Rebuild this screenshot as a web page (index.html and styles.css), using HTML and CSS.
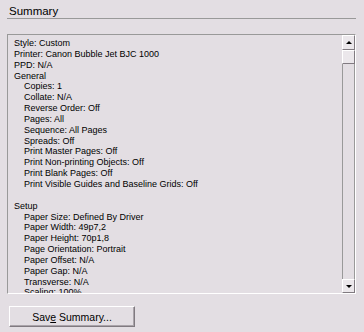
FILE: index.html
```html
<!DOCTYPE html>
<html lang="en">
<head>
    <meta charset="UTF-8">
    <meta name="viewport" content="width=device-width, initial-scale=1.0">
    <title>Summary</title>
    <link rel="stylesheet" href="styles.css">
</head>
<body>
    <div class="panel">
        <div class="title">Summary</div>

        <div class="listbox">
            <div class="list-content">
                <div>Style: Custom</div>
                <div>Printer: Canon Bubble Jet BJC 1000</div>
                <div>PPD: N/A</div>
                <div>General</div>
                <div class="sub">Copies: 1</div>
                <div class="sub">Collate: N/A</div>
                <div class="sub">Reverse Order: Off</div>
                <div class="sub">Pages: All</div>
                <div class="sub">Sequence: All Pages</div>
                <div class="sub">Spreads: Off</div>
                <div class="sub">Print Master Pages: Off</div>
                <div class="sub">Print Non-printing Objects: Off</div>
                <div class="sub">Print Blank Pages: Off</div>
                <div class="sub">Print Visible Guides and Baseline Grids: Off</div>
                <div class="blank"></div>
                <div>Setup</div>
                <div class="sub">Paper Size: Defined By Driver</div>
                <div class="sub">Paper Width: 49p7,2</div>
                <div class="sub">Paper Height: 70p1,8</div>
                <div class="sub">Page Orientation: Portrait</div>
                <div class="sub">Paper Offset: N/A</div>
                <div class="sub">Paper Gap: N/A</div>
                <div class="sub">Transverse: N/A</div>
                <div class="sub">Scaling: 100%</div>
            </div>
            <div class="scrollbar">
                <div class="sb-btn sb-up"><span class="arrow-up"></span></div>
                <div class="sb-thumb"></div>
                <div class="sb-track"></div>
                <div class="sb-btn sb-down"><span class="arrow-down"></span></div>
            </div>
        </div>

        <button class="save-btn">Sav<u>e</u> Summary...</button>
    </div>
</body>
</html>
```

FILE: styles.css
```css
body {
    margin: 0;
    background: #e3dee3;
    font-family: "Liberation Sans", Arial, sans-serif;
    color: #000;
}
.panel {
    padding: 5px 8px 0 7px;
    width: 349px;
}
.title {
    font-size: 11.5px;
    line-height: 13px;
    height: 13px;
    padding-left: 2px;
    border-bottom: 1px solid #999;
}
.listbox {
    margin-top: 15px;
    height: 258px;
    border: 1px solid;
    border-color: #999 #fff #fff #999;
    display: flex;
}
.list-content {
    flex: 1;
    padding: 3px 0 0 6px;
    overflow: hidden;
    font-size: 9px;
    line-height: 10.85px;
    white-space: nowrap;
}
.sub {
    padding-left: 10px;
}
.blank {
    height: 10.85px;
}
.scrollbar {
    width: 13px;
    display: flex;
    flex-direction: column;
}
.sb-btn,
.sb-thumb {
    box-sizing: border-box;
    border: 1px solid;
    border-color: #fff #807a80 #807a80 #fff;
    background: #ebe7eb;
    display: flex;
    align-items: center;
    justify-content: center;
}
.sb-up {
    height: 15px;
}
.sb-thumb {
    height: 14px;
}
.sb-down {
    height: 14px;
}
.sb-track {
    flex: 1;
    border-left: 1px solid #999;
    border-right: 1px solid #999;
}
.arrow-up {
    width: 0;
    height: 0;
    border-left: 3px solid transparent;
    border-right: 3px solid transparent;
    border-bottom: 3px solid #000;
}
.arrow-down {
    width: 0;
    height: 0;
    border-left: 3px solid transparent;
    border-right: 3px solid transparent;
    border-top: 3px solid #000;
}
.save-btn {
    display: block;
    margin: 12px 0 0 2px;
    width: 126px;
    height: 21px;
    padding: 0;
    font-family: "Liberation Sans", Arial, sans-serif;
    font-size: 10.5px;
    color: #000;
    background: #e3dee3;
    border: 1px solid;
    border-color: #fff #807a80 #807a80 #fff;
    box-shadow: inset -1px -1px 0 #aaa4aa;
}
```
